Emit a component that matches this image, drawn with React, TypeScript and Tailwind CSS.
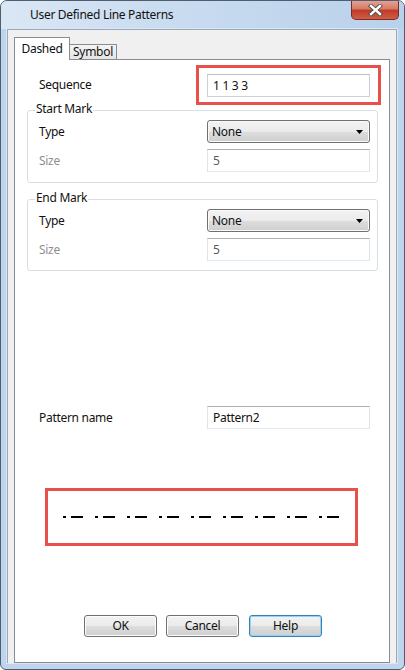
import React from 'react';

function TextBox({ value, muted, light }: { value: string; muted?: boolean; light?: boolean }) {
  return (
    <div
      className={
        'w-[163px] h-[23px] bg-white border flex items-center pl-[5px] text-[12px] ' +
        (light
          ? 'border-[#c9d0d8] border-t-[#b9c0c8] '
          : 'border-[#e2e3ea] border-t-[#abadb3] border-b-[#e3e9ef] ') +
        (muted ? 'text-[#5a5a5a]' : 'text-[#111]')
      }
    >
      {value}
    </div>
  );
}

function Select({ value }: { value: string }) {
  return (
    <div className="w-[163px] h-[23px] rounded-[3px] border border-[#707070] shadow-[inset_0_0_0_1px_#fafafa] bg-[linear-gradient(to_bottom,#f2f2f2_0%,#ebebeb_50%,#dddddd_51%,#cfcfcf_100%)] flex items-center justify-between pl-[4px] pr-[6px] text-[12px] text-[#111]">
      <span>{value}</span>
      <svg width="7" height="4" viewBox="0 0 7 4">
        <polygon points="0,0 7,0 3.5,4" fill="#000" />
      </svg>
    </div>
  );
}

function Row({ label, children, muted }: { label: string; children: React.ReactNode; muted?: boolean }) {
  return (
    <div className="flex items-center justify-between pl-[11px] pr-[7px]">
      <span className={'text-[12px] ' + (muted ? 'text-[#8f8f8f]' : 'text-[#111]')}>{label}</span>
      {children}
    </div>
  );
}

function GroupBox({ title, height }: { title: string; height: string }) {
  return (
    <div className={'relative ml-[12px] mr-[11px] rounded-[3px] border border-[#d5dfe5] pt-[9px] flex flex-col gap-[6px] ' + height}>
      <span className="absolute left-[7px] -top-[10px] px-[1px] bg-white text-[12px] text-[#111] leading-[16px]">{title}</span>
      <Row label="Type">
        <Select value="None" />
      </Row>
      <Row label="Size" muted>
        <TextBox value="5" muted />
      </Row>
    </div>
  );
}

function Button({ label, focused }: { label: string; focused?: boolean }) {
  return (
    <div
      className={
        'w-[73px] h-[22px] rounded-[3px] border flex items-center justify-center text-[12px] text-[#111] bg-[linear-gradient(to_bottom,#f2f2f2_0%,#ebebeb_50%,#dddddd_51%,#cfcfcf_100%)] ' +
        (focused
          ? 'border-[#3c7fb1] shadow-[inset_0_0_0_1px_#8ed6f8]'
          : 'border-[#707070] shadow-[inset_0_0_0_1px_#fcfcfc]')
      }
    >
      {label}
    </div>
  );
}

function PatternPreview() {
  // sequence 1 1 3 3 drawn at 4px per unit, repeated across the box
  const reps = Array.from({ length: 9 }, (_, i) => i);
  return (
    <svg width="307" height="52" viewBox="0 0 307 52">
      {reps.map((i) => (
        <g key={i}>
          <rect x={15 + i * 32} y={25} width={3} height={2} fill="#000" />
          <rect x={23 + i * 32} y={25} width={12} height={2} fill="#000" />
        </g>
      ))}
    </svg>
  );
}

export default function App() {
  return (
    <div className="w-[405px] h-[670px] flex flex-col overflow-hidden rounded-t-[7px] rounded-b-[6px] border border-[#4f5d6c] bg-[#bfd5ee] font-['Noto_Sans','Liberation_Sans',sans-serif] tracking-[-0.3px]">
      {/* title bar */}
      <div className="h-[28px] flex items-start justify-between bg-[linear-gradient(to_right,#dae7f5_0%,#cadcf0_40%,#b9d1ea_100%)]">
        <span className="pl-[29px] pt-[6px] text-[12px] leading-[16px] text-[#111]">User Defined Line Patterns</span>
        <div className="-mt-px mr-[5px] w-[48px] h-[20px] rounded-b-[5px] border border-t-0 border-[#7b2b22] bg-[linear-gradient(to_bottom,#e6a797_0%,#d77c69_45%,#c23b27_55%,#cf5e48_100%)] flex items-center justify-center">
          <svg width="15" height="12" viewBox="0 0 15 12">
            <path d="M3 2 L12 10 M12 2 L3 10" stroke="#4b4b4b" strokeWidth="4.2" strokeLinecap="square" />
            <path d="M3 2 L12 10 M12 2 L3 10" stroke="#ffffff" strokeWidth="2.4" strokeLinecap="square" />
          </svg>
        </div>
      </div>

      {/* client area */}
      <div className="flex-1 ml-[6px] mr-[7px] mb-[6px] flex flex-col bg-[#f0f0f0] border border-b-0 border-[#9ba8b7] shadow-[0_0_0_1px_#dbe7f5] pl-[6px] pr-[6px] pt-[7px]">
        {/* tabs */}
        <div className="h-[22px] flex items-end">
          <div className="relative z-10 -mb-px w-[56px] h-[23px] bg-white border border-b-0 border-[#898c95] flex items-center justify-center pb-[1px] text-[12px] text-[#111]">
            Dashed
          </div>
          <div className="w-[47px] h-[15px] border border-l-0 border-b-0 border-[#898c95] bg-[linear-gradient(to_bottom,#f4f4f4,#e4e4e4)] flex items-center justify-center text-[12px] text-[#111] leading-[14px]">
            Symbol
          </div>
        </div>

        {/* tab panel */}
        <div className="flex-1 bg-white border border-[#898c95] flex flex-col">
          <div className="mt-[5px] flex items-center justify-between pl-[24px] pr-[8px]">
            <span className="text-[12px] text-[#111]">Sequence</span>
            <div className="w-[185px] h-[40px] border-[3px] border-[#e8504b] flex justify-center pt-[6px]">
              <TextBox value="1 1 3 3" light />
            </div>
          </div>

          <div className="mt-[5px]">
            <GroupBox title="Start Mark" height="h-[73px]" />
          </div>
          <div className="mt-[16px]">
            <GroupBox title="End Mark" height="h-[72px]" />
          </div>

          <div className="mt-[135px] flex items-center justify-between pl-[24px] pr-[19px]">
            <span className="text-[12px] text-[#111]">Pattern name</span>
            <TextBox value="Pattern2" />
          </div>

          <div className="mt-[59px] ml-[30px] w-[313px] h-[58px] border-[3px] border-[#e8504b]">
            <PatternPreview />
          </div>

          <div className="mt-[69px] pl-[69px] flex gap-[9px]">
            <Button label="OK" />
            <Button label="Cancel" />
            <div className="ml-[1px]">
              <Button label="Help" focused />
            </div>
          </div>
        </div>
      </div>
    </div>
  );
}
